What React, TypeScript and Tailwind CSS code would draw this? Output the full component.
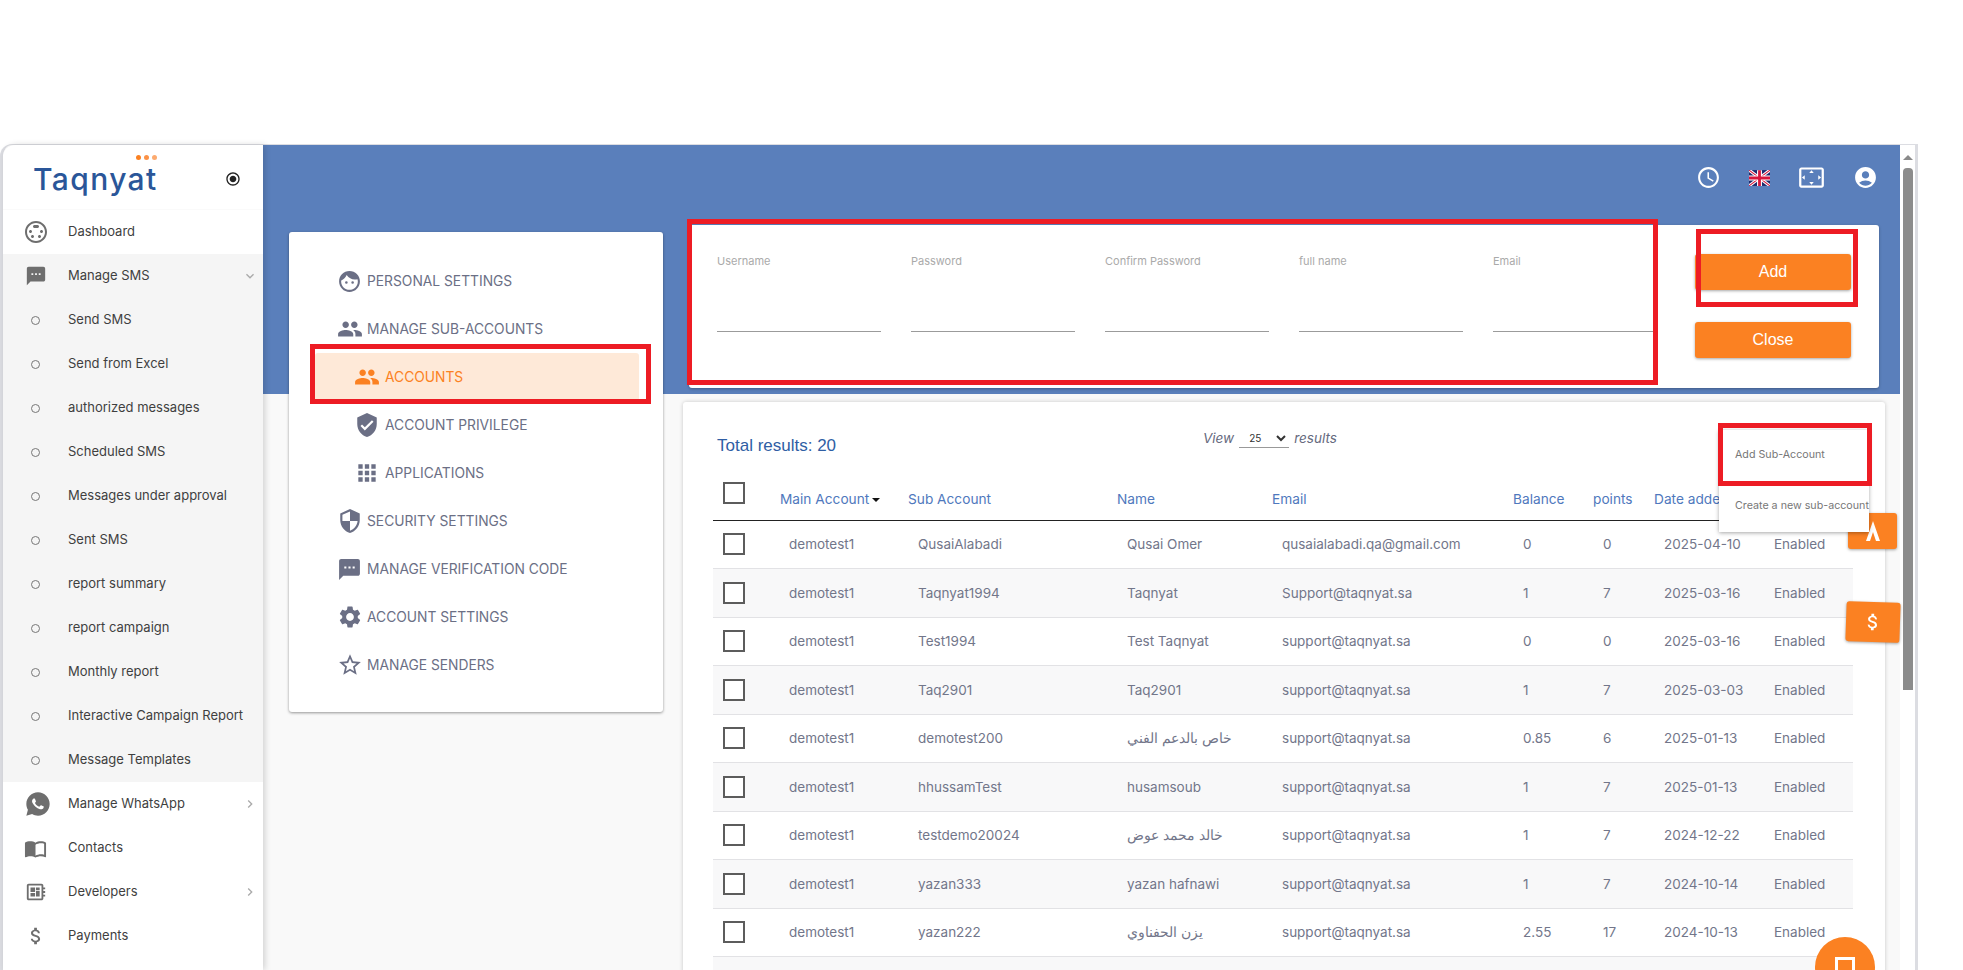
import type { ReactNode } from 'react';
import {
  MdAccountCircle,
  MdApps,
  MdAttachMoney,
  MdChevronRight,
  MdDeveloperBoard,
  MdExpandMore,
  MdFace,
  MdImportContacts,
  MdOutlineAccessTime,
  MdPeople,
  MdRadioButtonChecked,
  MdSecurity,
  MdSettings,
  MdSettingsInputSvideo,
  MdSettingsOverscan,
  MdSms,
  MdStarBorder,
  MdVerifiedUser,
} from 'react-icons/md';
import { RiWhatsappFill } from 'react-icons/ri';

const smsLinks = [
  'Send SMS',
  'Send from Excel',
  'authorized messages',
  'Scheduled SMS',
  'Messages under approval',
  'Sent SMS',
  'report summary',
  'report campaign',
  'Monthly report',
  'Interactive Campaign Report',
  'Message Templates',
];

const settingsLinks = [
  { label: 'PERSONAL SETTINGS', icon: <MdFace size={25} /> },
  { label: 'MANAGE SUB-ACCOUNTS', icon: <MdPeople size={26} /> },
  { label: 'ACCOUNTS', icon: <MdPeople size={26} />, sub: true, active: true },
  { label: 'ACCOUNT PRIVILEGE', icon: <MdVerifiedUser size={26} />, sub: true },
  { label: 'APPLICATIONS', icon: <MdApps size={26} />, sub: true },
  { label: 'SECURITY SETTINGS', icon: <MdSecurity size={26} /> },
  { label: 'MANAGE VERIFICATION CODE', icon: <MdSms size={25} /> },
  { label: 'ACCOUNT SETTINGS', icon: <MdSettings size={26} /> },
  { label: 'MANAGE SENDERS', icon: <MdStarBorder size={26} /> },
];

const formFields = ['Username', 'Password', 'Confirm Password', 'full name', 'Email'];

const columns = [
  { label: '', width: 'w-[65px]' },
  { label: 'Main Account', width: 'w-[129px]', sorted: true },
  { label: 'Sub Account', width: 'w-[209px]' },
  { label: 'Name', width: 'w-[155px]' },
  { label: 'Email', width: 'w-[241px]' },
  { label: 'Balance', width: 'w-[80px]' },
  { label: 'points', width: 'w-[61px]' },
  { label: 'Date added', width: 'w-[110px]' },
  { label: 'Status', width: 'w-[90px]' },
];

const rows = [
  ['demotest1', 'QusaiAlabadi', 'Qusai Omer', 'qusaialabadi.qa@gmail.com', '0', '0', '2025-04-10', 'Enabled'],
  ['demotest1', 'Taqnyat1994', 'Taqnyat', 'Support@taqnyat.sa', '1', '7', '2025-03-16', 'Enabled'],
  ['demotest1', 'Test1994', 'Test Taqnyat', 'support@taqnyat.sa', '0', '0', '2025-03-16', 'Enabled'],
  ['demotest1', 'Taq2901', 'Taq2901', 'support@taqnyat.sa', '1', '7', '2025-03-03', 'Enabled'],
  ['demotest1', 'demotest200', 'خاص بالدعم الفني', 'support@taqnyat.sa', '0.85', '6', '2025-01-13', 'Enabled'],
  ['demotest1', 'hhussamTest', 'husamsoub', 'support@taqnyat.sa', '1', '7', '2025-01-13', 'Enabled'],
  ['demotest1', 'testdemo20024', 'خالد محمد عوض', 'support@taqnyat.sa', '1', '7', '2024-12-22', 'Enabled'],
  ['demotest1', 'yazan333', 'yazan hafnawi', 'support@taqnyat.sa', '1', '7', '2024-10-14', 'Enabled'],
  ['demotest1', 'yazan222', 'يزن الحفناوي', 'support@taqnyat.sa', '2.55', '17', '2024-10-13', 'Enabled'],
  ['', '', '', '', '', '', '', ''],
];

function SideItem({ icon, label, chevron }: { icon: ReactNode; label: string; chevron?: ReactNode }) {
  return (
    <div className="flex h-[44px] items-center text-[13px] text-[#3f3f3f]">
      <span className="flex w-[65px] shrink-0 justify-center text-[#6e6e6e]">{icon}</span>
      <span className="flex-1 truncate">{label}</span>
      {chevron && <span className="pr-[5px] text-[#aaaaaa]">{chevron}</span>}
    </div>
  );
}

function Sidebar() {
  return (
    <aside className="z-10 flex w-[260px] shrink-0 flex-col rounded-tl-[12px] bg-white shadow-[2px_0_6px_rgba(0,0,0,0.16)]">
      <div className="flex h-[65px] items-center border-b border-[#fafafa] pl-[30px] pr-[22px] pt-[4px]">
        <div className="relative flex-1">
          <span className="block text-[30px] font-medium leading-none tracking-[1.4px] text-[#2a5699]">Taqnyat</span>
          <span className="absolute left-[103px] top-[-9px] flex gap-[3px]">
            <i className="size-[5px] rounded-full bg-[#fb8122]" />
            <i className="size-[5px] rounded-full bg-[#fb9247]" />
            <i className="size-[5px] rounded-full bg-[#fcaa6f]" />
          </span>
        </div>
        <MdRadioButtonChecked size={16} className="text-[#222222]" />
      </div>
      <SideItem icon={<MdSettingsInputSvideo size={24} />} label="Dashboard" />
      <div className="bg-[#f5f5f5]">
        <SideItem icon={<MdSms size={22} />} label="Manage SMS" chevron={<MdExpandMore size={16} />} />
        {smsLinks.map((link) => (
          <SideItem key={link} icon={<i className="size-[9px] rounded-full border border-[#777777]" />} label={link} />
        ))}
      </div>
      <SideItem icon={<RiWhatsappFill size={28} className="ml-[5px]" />} label="Manage WhatsApp" chevron={<MdChevronRight size={16} />} />
      <SideItem icon={<MdImportContacts size={23} />} label="Contacts" />
      <SideItem icon={<MdDeveloperBoard size={22} />} label="Developers" chevron={<MdChevronRight size={16} />} />
      <SideItem icon={<MdAttachMoney size={22} />} label="Payments" />
    </aside>
  );
}

function UkFlag() {
  return (
    <svg width="21" height="16" viewBox="0 0 60 45" aria-hidden="true">
      <rect width="60" height="45" fill="#1d2a6d" />
      <path d="M0 0L60 45M60 0L0 45" stroke="#ffffff" strokeWidth="9" />
      <path d="M0 0L60 45M60 0L0 45" stroke="#d8163c" strokeWidth="3" />
      <path d="M30 0V45M0 22.5H60" stroke="#ffffff" strokeWidth="14" />
      <path d="M30 0V45M0 22.5H60" stroke="#d8163c" strokeWidth="8" />
    </svg>
  );
}

function TopBar() {
  return (
    <div className="h-[249px] bg-[#5a7fbb]">
      <div className="flex items-center justify-end gap-[28px] pr-[22px] pt-[19px] text-white">
        <MdOutlineAccessTime size={25} />
        <UkFlag />
        <MdSettingsOverscan size={27} />
        <MdAccountCircle size={25} />
      </div>
    </div>
  );
}

function SettingsMenu() {
  return (
    <nav className="mt-[7px] h-[480px] w-[374px] shrink-0 rounded-[3px] bg-white pb-[24px] pl-[26px] pr-[24px] pt-[25px] shadow-[0_1px_3px_rgba(0,0,0,0.4)]">
      {settingsLinks.map((item) => (
        <div
          key={item.label}
          className={`flex h-[48px] items-center text-[13.8px] ${item.active ? 'rounded-[3px] bg-[#fee9d8] text-[#fb8122]' : 'text-[#6b6f85]'} ${item.sub ? 'pl-[39px]' : 'pl-[22px]'}`}
        >
          <span className={`flex shrink-0 justify-start ${item.sub ? 'w-[31px]' : 'w-[30px]'}`}>{item.icon}</span>
          <span>{item.label}</span>
        </div>
      ))}
    </nav>
  );
}

function AccountForm() {
  return (
    <section className="mx-[6px] flex h-[163px] rounded-[3px] bg-white shadow-[0_1px_3px_rgba(0,0,0,0.3)]">
      <div className="flex w-[970px] gap-[30px] pl-[28px] pt-[29px]">
        {formFields.map((field) => (
          <label key={field} className="block w-[164px] shrink-0 text-[11px] text-[#aaaaaa]">
            <span className="block h-[14px] leading-[14px]">{field}</span>
            <span className="mt-[63px] block border-b border-[#9b9b9b]" />
          </label>
        ))}
      </div>
      <div className="ml-[36px] flex w-[156px] flex-col gap-[32px] pt-[29px]">
        <button className="h-[36px] rounded-[3px] bg-[#fb8122] font-['Liberation_Sans',sans-serif] text-[16px] text-white shadow-[0_1px_3px_rgba(0,0,0,0.35)]">Add</button>
        <button className="h-[36px] rounded-[3px] bg-[#fb8122] font-['Liberation_Sans',sans-serif] text-[16px] text-white shadow-[0_1px_3px_rgba(0,0,0,0.35)]">Close</button>
      </div>
    </section>
  );
}

function Check() {
  return <span className="block size-[22px] border-[2px] border-[#5c5c5c] bg-white" />;
}

function AccountsTable() {
  return (
    <section className="mt-[14px] h-[600px] rounded-[3px] bg-white pl-[30px] pr-[28px] shadow-[0_0_4px_rgba(0,0,0,0.2)]">
      <div className="flex h-[74px] items-start">
        <span className="mt-[31px] w-[490px] pl-[4px] font-['Liberation_Sans',sans-serif] text-[17px] text-[#2f5ea4]">Total results: 20</span>
        <div className="mt-[26px] flex items-center gap-[5px] text-[13.5px] italic text-[#666a7e]">
          <span>View</span>
          <select defaultValue="25" className="h-[20px] w-[50px] border-b border-[#999999] pl-[6px] text-[10px] not-italic text-[#333333]">
            <option>25</option>
          </select>
          <span>results</span>
        </div>
      </div>
      <table className="w-[1140px] table-fixed border-collapse">
        <thead>
          <tr className="h-[44px] border-b border-[#222222]">
            {columns.map((col) => (
              <th key={col.label} className={`${col.width} text-left align-top text-[13.7px] font-normal text-[#4f78bd]`}>
                {col.label ? (
                  <span className={`mt-[13px] block whitespace-nowrap ${col.sorted ? 'pl-[2px]' : 'pl-[1px]'}`}>
                    {col.label}
                    {col.sorted && <i className="ml-[3px] inline-block border-x-[4px] border-t-[4px] border-x-transparent border-t-[#111111] align-middle" />}
                  </span>
                ) : (
                  <span className="mt-[6px] block pl-[10px]">
                    <Check />
                  </span>
                )}
              </th>
            ))}
          </tr>
        </thead>
        <tbody>
          {rows.map((row, i) => (
            <tr key={i} className={`h-[48.5px] border-b border-[#e2e2e5] ${i % 2 ? 'bg-[#f8f8f9]' : 'bg-white'}`}>
              <td className="pl-[10px]">
                <Check />
              </td>
              {row.map((cell, j) => (
                <td key={j} className="truncate pl-[11px] text-[13.5px] text-[#72768a]">
                  {cell}
                </td>
              ))}
            </tr>
          ))}
        </tbody>
      </table>
    </section>
  );
}

function ScrollTrack() {
  return (
    <div className="flex w-[15px] shrink-0 flex-col items-center rounded-tr-[8px] bg-white pt-[10px]">
      <i className="border-x-[5px] border-b-[5px] border-x-transparent border-b-[#8a8a8a]" />
      <i className="mt-[8px] h-[522px] w-[10px] rounded-t-[4px] bg-[#8c8c8c]" />
    </div>
  );
}

function RedBox({ className }: { className: string }) {
  return <div className={`pointer-events-none absolute z-30 border-[5px] border-[#ed1c24] ${className}`} />;
}

export default function App() {
  return (
    <div className="relative h-[970px] w-[1963px] overflow-hidden bg-white font-['Inter',sans-serif]">
      <div className="h-[144px]" />
      <div className="flex h-[826px] w-[1918px] rounded-tl-[12px] border-x-[3px] border-t border-[#dcdde2]">
        <Sidebar />
        <main className="min-w-0 flex-1 overflow-hidden bg-[#f9f9f9]">
          <TopBar />
          <div className="mt-[-169px] flex gap-[20px] pl-[26px]">
            <SettingsMenu />
            <div className="w-[1202px] shrink-0">
              <AccountForm />
              <AccountsTable />
            </div>
          </div>
        </main>
        <ScrollTrack />
      </div>

      {/* sub-account popup */}
      <div className="absolute left-[1719px] top-[430px] z-20 h-[102px] w-[150px] bg-white text-[10.7px] text-[#777777] shadow-[0_1px_4px_rgba(0,0,0,0.35)]">
        <div className="flex h-[51px] items-center whitespace-nowrap pl-[16px]">Add Sub-Account</div>
        <div className="flex h-[51px] items-center whitespace-nowrap pl-[16px]">Create a new sub-account</div>
      </div>

      {/* floating buttons */}
      <div className="absolute left-[1848px] top-[513px] z-10 flex h-[36px] w-[49px] items-center justify-center rounded-[3px] bg-[#fb8122] shadow-[0_1px_3px_rgba(0,0,0,0.35)]">
        <svg width="16" height="20" viewBox="0 0 16 20" fill="white" aria-hidden="true">
          <path d="M8 0L15 20H11L8 11L5 20H1Z" />
        </svg>
      </div>
      <div className="absolute left-[1846px] top-[602px] z-10 flex h-[40px] w-[54px] rotate-[2deg] items-center justify-center rounded-[3px] bg-[#fb8122] text-white shadow-[0_1px_3px_rgba(0,0,0,0.35)]">
        <MdAttachMoney size={22} />
      </div>
      <div className="absolute left-[1815px] top-[937px] z-10 flex h-[60px] w-[60px] items-center justify-center rounded-full bg-[#fb8122]">
        <span className="block h-[20px] w-[20px] border-[3px] border-white" />
      </div>

      {/* annotations */}
      <RedBox className="left-[687px] top-[219px] h-[166px] w-[971px]" />
      <RedBox className="left-[1696px] top-[229px] h-[78px] w-[162px]" />
      <RedBox className="left-[310px] top-[344px] h-[60px] w-[341px]" />
      <RedBox className="left-[1718px] top-[423px] h-[63px] w-[154px]" />
    </div>
  );
}
